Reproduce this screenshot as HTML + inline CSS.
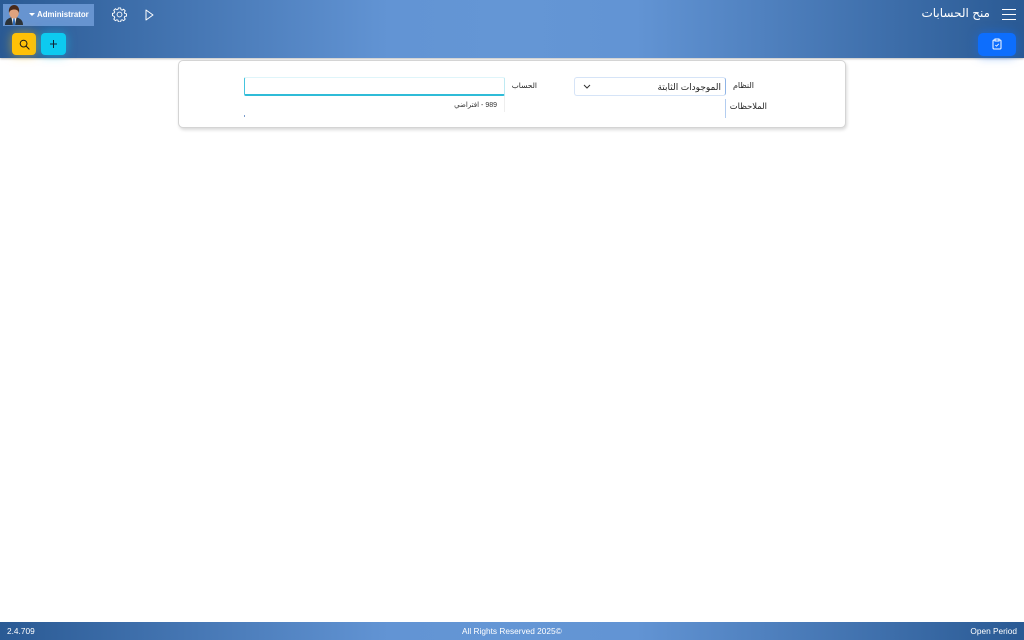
<!DOCTYPE html>
<html lang="ar">
<head>
<meta charset="utf-8">
<title>منح الحسابات</title>
<style>
*{box-sizing:border-box}
html,body{margin:0;padding:0;width:1024px;height:640px;overflow:hidden;background:#fff;font-family:"Liberation Sans","Noto Sans CJK SC","DejaVu Sans",sans-serif;color:#222}
.abs{position:absolute}
#hdr{left:0;top:0;width:1024px;height:58px;background:linear-gradient(90deg,#2a5a94 0%,#6294d4 38%,#6496d5 50%,#6294d4 62%,#2a5a94 100%);box-shadow:0 1px 2px rgba(0,0,0,.25)}
#ftr{left:0;top:622px;width:1024px;height:18px;background:linear-gradient(90deg,#2a5a94 0%,#6294d4 38%,#6496d5 50%,#6294d4 62%,#2a5a94 100%);color:#fff;font-size:8.3px;line-height:18px}
.btn{border-radius:4px}
.t{white-space:nowrap;direction:rtl}
</style>
</head>
<body>
<div id="hdr" class="abs"></div>

<div class="abs" style="left:3px;top:4px;width:91px;height:22px;background:#6794d0"></div>
<svg class="abs" style="left:4px;top:4px" width="20" height="22" viewBox="0 0 20 22">
<path d="M1 21c0-5 3-6.500 6-7.500h6c3 1 6 2.500 6 7.500z" fill="#2b3238"/>
<path d="M7.500 13.500h5L11 21H9z" fill="#e8edf2"/>
<path d="M9.300 14.500h1.400l.6 6.500H8.700z" fill="#2f6fc0"/>
<ellipse cx="10" cy="9" rx="4.800" ry="5.500" fill="#dfa27e"/>
<path d="M5 9c-.8-5.500 2-8 5.200-8s5.600 2.500 4.800 8c-.8-2.500-2-3.500-4.800-3.500S5.800 6.500 5 9z" fill="#4a2a1a"/>
</svg>
<svg class="abs" style="left:29px;top:13px" width="6" height="4"><path d="M0 0h6L3 3z" fill="#fff"/></svg>
<div class="abs" style="left:37px;top:9px;font-size:7.900px;line-height:12px;font-weight:bold;color:#fff;white-space:nowrap">Administrator</div>

<svg class="abs" style="left:111.500px;top:7px" width="15" height="15" viewBox="0 0 16 16" fill="none" stroke="#fff" stroke-width="1">
<circle cx="8" cy="8" r="2.600"/>
<path d="M6.800 1h2.400l.4 1.900 1.200.5 1.600-1 1.700 1.700-1 1.600.5 1.200 1.900.4v2.400l-1.900.4-.5 1.200 1 1.600-1.700 1.700-1.600-1-1.200.5-.4 1.900H6.800l-.4-1.900-1.200-.5-1.600 1-1.700-1.700 1-1.600-.5-1.200L.5 9.200V6.800l1.900-.4.500-1.200-1-1.600 1.700-1.700 1.600 1 1.200-.5z"/>
</svg>
<svg class="abs" style="left:145px;top:9px" width="9" height="12" viewBox="0 0 9 12" fill="none" stroke="#fff" stroke-width="1"><path d="M1 1v10l7-5z" stroke-linejoin="round"/></svg>

<div class="abs t" style="right:34px;top:4px;font-size:12px;line-height:18px;color:#fff">منح الحسابات</div>
<svg class="abs" style="left:1002px;top:9px" width="14" height="12"><path d="M0 .5h14M0 5.500h14M0 10.500h14" stroke="#fff" stroke-width="1.100"/></svg>

<div class="abs btn" style="left:12px;top:33px;width:24px;height:22px;background:#ffc107;box-shadow:0 0 10px rgba(255,193,7,.55)"></div>
<svg class="abs" style="left:18.500px;top:38.500px" width="11" height="11" viewBox="0 0 12 12" fill="none" stroke="#1a1a1a" stroke-width="1.100"><circle cx="5" cy="5" r="3.700"/><path d="M7.800 7.800L11 11" stroke-linecap="round"/></svg>

<div class="abs btn" style="left:41px;top:33px;width:25px;height:22px;background:#0dcaf0;box-shadow:0 0 10px rgba(13,202,240,.55)"></div>
<svg class="abs" style="left:49px;top:39px" width="9" height="10"><path d="M4.500 1v8M1 5h7" stroke="#123" stroke-width="1"/></svg>

<div class="abs btn" style="left:978px;top:33px;width:38px;height:23px;background:#0d6efd;box-shadow:0 0 10px rgba(13,110,253,.55);border-radius:5px"></div>
<svg class="abs" style="left:992px;top:38px" width="10" height="12" viewBox="0 0 10 12" fill="none" stroke="#fff" stroke-width="1"><rect x="1" y="2" width="8" height="9" rx="1"/><rect x="3" y="1" width="4" height="2" fill="#0d6efd"/><path d="M3.300 7l1.200 1.200L6.800 5.800" stroke-width=".8"/></svg>

<div class="abs" style="left:178px;top:60px;width:668px;height:68px;background:#fff;border:1px solid #d4d4d4;border-radius:5px;box-shadow:1px 2px 3px rgba(0,0,0,.15)"></div>

<div class="abs t" style="right:270px;top:80px;font-size:8px;line-height:11px;color:#222">النظام</div>
<div class="abs t" style="right:257px;top:101px;font-size:8.400px;line-height:11px;color:#222">الملاحظات</div>
<div class="abs t" style="right:487px;top:80px;font-size:7.500px;line-height:11px;color:#222">الحساب</div>

<div class="abs" style="left:574px;top:77px;width:152px;height:19px;background:#fff;border:1px solid #d6e4f7;border-right-color:#8fb4e6;border-radius:3px"></div>
<div class="abs t" style="right:303px;top:81px;font-size:9px;line-height:13px;color:#222">الموجودات الثابتة</div>
<svg class="abs" style="left:583px;top:84px" width="8" height="5"><path d="M1 1l3 3 3-3" fill="none" stroke="#333" stroke-width="1"/></svg>

<div class="abs" style="left:725px;top:99px;width:1px;height:19px;background:#b3cdf0"></div>

<div class="abs" style="left:244px;top:77px;width:261px;height:19px;background:#fff;border:1px solid #dff5fa;border-left:1px solid #45c4de;border-bottom:2px solid #2fbcd8;border-right-color:#bfeaf3;border-radius:2px"></div>
<div class="abs" style="left:504px;top:96px;width:1px;height:16px;background:#eee"></div>
<div class="abs t" style="right:527px;top:100px;font-size:7px;line-height:11px;color:#333">989 - افتراضي</div>
<div class="abs" style="left:244px;top:115px;width:1px;height:2px;background:#7a9ccc"></div>

<div id="ftr" class="abs">
<span class="abs" style="left:7px;top:0;white-space:nowrap">2.4.709</span>
<span class="abs" style="left:462px;top:0;white-space:nowrap">All Rights Reserved 2025©</span>
<span class="abs" style="right:7px;top:0;white-space:nowrap">Open Period</span>
</div>
</body>
</html>
